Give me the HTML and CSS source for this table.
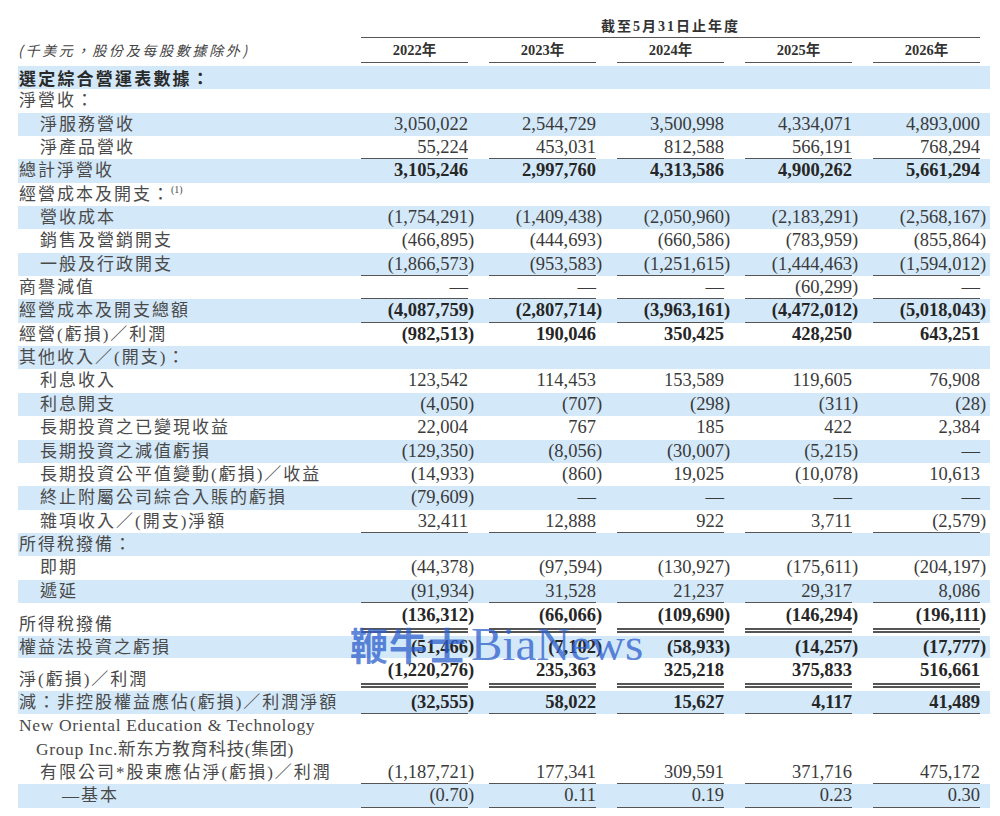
FILE: index.html
```html
<!DOCTYPE html>
<html lang="zh-Hant">
<head>
<meta charset="utf-8">
<title>選定綜合營運表數據</title>
<link rel="stylesheet" href="styles.css">
</head>
<body>
<div class="sheet">
  <div class="row head-top">
    <div class="period">截至5月31日止年度</div>
  </div>
  <div class="row head-years">
    <div class="unit">(千美元，股份及每股數據除外)</div>
    <div class="year">2022年</div>
    <div class="year">2023年</div>
    <div class="year">2024年</div>
    <div class="year">2025年</div>
    <div class="year">2026年</div>
  </div>

  <div class="row band"><div class="lbl heading">選定綜合營運表數據：</div></div>
  <div class="row"><div class="lbl">淨營收：</div></div>
  <div class="row band"><div class="lbl l1">淨服務營收</div>
    <div class="num">3,050,022</div><div class="num">2,544,729</div><div class="num">3,500,998</div><div class="num">4,334,071</div><div class="num">4,893,000</div></div>
  <div class="row ul"><div class="lbl l1">淨產品營收</div>
    <div class="num">55,224</div><div class="num">453,031</div><div class="num">812,588</div><div class="num">566,191</div><div class="num">768,294</div></div>
  <div class="row band bold"><div class="lbl">總計淨營收</div>
    <div class="num">3,105,246</div><div class="num">2,997,760</div><div class="num">4,313,586</div><div class="num">4,900,262</div><div class="num">5,661,294</div></div>
  <div class="row"><div class="lbl">經營成本及開支：<sup class="fn">(1)</sup></div></div>
  <div class="row band"><div class="lbl l1">營收成本</div>
    <div class="num">(1,754,291<span class="cp">)</span></div><div class="num">(1,409,438<span class="cp">)</span></div><div class="num">(2,050,960<span class="cp">)</span></div><div class="num">(2,183,291<span class="cp">)</span></div><div class="num">(2,568,167<span class="cp">)</span></div></div>
  <div class="row"><div class="lbl l1">銷售及營銷開支</div>
    <div class="num">(466,895<span class="cp">)</span></div><div class="num">(444,693<span class="cp">)</span></div><div class="num">(660,586<span class="cp">)</span></div><div class="num">(783,959<span class="cp">)</span></div><div class="num">(855,864<span class="cp">)</span></div></div>
  <div class="row band ul"><div class="lbl l1">一般及行政開支</div>
    <div class="num">(1,866,573<span class="cp">)</span></div><div class="num">(953,583<span class="cp">)</span></div><div class="num">(1,251,615<span class="cp">)</span></div><div class="num">(1,444,463<span class="cp">)</span></div><div class="num">(1,594,012<span class="cp">)</span></div></div>
  <div class="row ul"><div class="lbl">商譽減值</div>
    <div class="num">—</div><div class="num">—</div><div class="num">—</div><div class="num">(60,299<span class="cp">)</span></div><div class="num">—</div></div>
  <div class="row band bold ul"><div class="lbl">經營成本及開支總額</div>
    <div class="num">(4,087,759<span class="cp">)</span></div><div class="num">(2,807,714<span class="cp">)</span></div><div class="num">(3,963,161<span class="cp">)</span></div><div class="num">(4,472,012<span class="cp">)</span></div><div class="num">(5,018,043<span class="cp">)</span></div></div>
  <div class="row bold"><div class="lbl">經營(虧損)／利潤</div>
    <div class="num">(982,513<span class="cp">)</span></div><div class="num">190,046</div><div class="num">350,425</div><div class="num">428,250</div><div class="num">643,251</div></div>
  <div class="row band"><div class="lbl">其他收入／(開支)：</div></div>
  <div class="row"><div class="lbl l1">利息收入</div>
    <div class="num">123,542</div><div class="num">114,453</div><div class="num">153,589</div><div class="num">119,605</div><div class="num">76,908</div></div>
  <div class="row band"><div class="lbl l1">利息開支</div>
    <div class="num">(4,050<span class="cp">)</span></div><div class="num">(707<span class="cp">)</span></div><div class="num">(298<span class="cp">)</span></div><div class="num">(311<span class="cp">)</span></div><div class="num">(28<span class="cp">)</span></div></div>
  <div class="row"><div class="lbl l1">長期投資之已變現收益</div>
    <div class="num">22,004</div><div class="num">767</div><div class="num">185</div><div class="num">422</div><div class="num">2,384</div></div>
  <div class="row band"><div class="lbl l1">長期投資之減值虧損</div>
    <div class="num">(129,350<span class="cp">)</span></div><div class="num">(8,056<span class="cp">)</span></div><div class="num">(30,007<span class="cp">)</span></div><div class="num">(5,215<span class="cp">)</span></div><div class="num">—</div></div>
  <div class="row"><div class="lbl l1">長期投資公平值變動(虧損)／收益</div>
    <div class="num">(14,933<span class="cp">)</span></div><div class="num">(860<span class="cp">)</span></div><div class="num">19,025</div><div class="num">(10,078<span class="cp">)</span></div><div class="num">10,613</div></div>
  <div class="row band"><div class="lbl l1">終止附屬公司綜合入賬的虧損</div>
    <div class="num">(79,609<span class="cp">)</span></div><div class="num">—</div><div class="num">—</div><div class="num">—</div><div class="num">—</div></div>
  <div class="row ul"><div class="lbl l1">雜項收入／(開支)淨額</div>
    <div class="num">32,411</div><div class="num">12,888</div><div class="num">922</div><div class="num">3,711</div><div class="num">(2,579<span class="cp">)</span></div></div>
  <div class="row band"><div class="lbl">所得稅撥備：</div></div>
  <div class="row"><div class="lbl l1">即期</div>
    <div class="num">(44,378<span class="cp">)</span></div><div class="num">(97,594<span class="cp">)</span></div><div class="num">(130,927<span class="cp">)</span></div><div class="num">(175,611<span class="cp">)</span></div><div class="num">(204,197<span class="cp">)</span></div></div>
  <div class="row band ul"><div class="lbl l1">遞延</div>
    <div class="num">(91,934<span class="cp">)</span></div><div class="num">31,528</div><div class="num">21,237</div><div class="num">29,317</div><div class="num">8,086</div></div>
  <div class="row tall bold dbl"><div class="lbl">所得稅撥備</div>
    <div class="num">(136,312<span class="cp">)</span></div><div class="num">(66,066<span class="cp">)</span></div><div class="num">(109,690<span class="cp">)</span></div><div class="num">(146,294<span class="cp">)</span></div><div class="num">(196,111<span class="cp">)</span></div></div>
  <div class="row band bold short"><div class="lbl">權益法投資之虧損</div>
    <div class="num">(51,466<span class="cp">)</span></div><div class="num">(7,102<span class="cp">)</span></div><div class="num">(58,933<span class="cp">)</span></div><div class="num">(14,257<span class="cp">)</span></div><div class="num">(17,777<span class="cp">)</span></div></div>
  <div class="row tall bold dbl"><div class="lbl">淨(虧損)／利潤</div>
    <div class="num">(1,220,276<span class="cp">)</span></div><div class="num">235,363</div><div class="num">325,218</div><div class="num">375,833</div><div class="num">516,661</div></div>
  <div class="row band bold ul"><div class="lbl">減：非控股權益應佔(虧損)／利潤淨額</div>
    <div class="num">(32,555<span class="cp">)</span></div><div class="num">58,022</div><div class="num">15,627</div><div class="num">4,117</div><div class="num">41,489</div></div>
  <div class="row multi ul"><div class="lbl">
      <span class="line en">New Oriental Education &amp; Technology</span>
      <span class="line en hang">Group Inc.新东方教育科技(集团)</span>
      <span class="line hang2">有限公司*股東應佔淨(虧損)／利潤</span></div>
    <div class="num">(1,187,721<span class="cp">)</span></div><div class="num">177,341</div><div class="num">309,591</div><div class="num">371,716</div><div class="num">475,172</div></div>
  <div class="row band ul"><div class="lbl l2">—基本</div>
    <div class="num">(0.70<span class="cp">)</span></div><div class="num">0.11</div><div class="num">0.19</div><div class="num">0.23</div><div class="num">0.30</div></div>

  <div class="watermark"><span class="wm-cn">鞭牛士</span> <span class="wm-en">BiaNews</span></div>
</div>
</body>
</html>
```

FILE: styles.css
```css
html, body {
  margin: 0;
  padding: 0;
  background: #ffffff;
}

body {
  font-family: "Liberation Serif", "Noto Sans CJK TC", serif;
  color: #3c3c3c;
}

.sheet {
  position: relative;
  width: 972px;
  margin-left: 18px;
  padding-top: 17px;
}

.row {
  display: grid;
  grid-template-columns: 322px repeat(5, 128px);
  padding-right: 10px;
  height: 23.35px;
}

.band {
  background: #d3e8f8;
}

.lbl {
  font-family: "Liberation Serif", "Noto Sans CJK TC", serif;
  font-size: 17px;
  letter-spacing: 2px;
  line-height: 23px;
  padding-left: 1px;
  color: #4a4a4a;
  white-space: nowrap;
}

.lbl.l1 { padding-left: 22px; }
.lbl.l2 { padding-left: 44px; }

.heading {
  font-family: "Noto Sans CJK TC", sans-serif;
  font-weight: 700;
  color: #2a2a2a;
  letter-spacing: 2.2px;
}

.fn {
  font-family: "Liberation Serif", serif;
  font-size: 10px;
  letter-spacing: 0;
  vertical-align: 7px;
  line-height: 0;
}

.num {
  margin-left: 21px;
  text-align: right;
  font-family: "Liberation Serif", serif;
  font-size: 18.5px;
  line-height: 22px;
  color: #3a3a3a;
  white-space: nowrap;
}

.cp {
  margin-right: -0.333em;
}

.bold .num {
  font-weight: 700;
  color: #262626;
}

.ul .num {
  border-bottom: 1px solid #555;
}

/* header */
.head-top {
  height: 20px;
}

.period {
  grid-column: 2 / -1;
  margin-left: 21px;
  border-bottom: 1px solid #555;
  text-align: center;
  font-family: "Liberation Serif", "Noto Sans CJK TC", serif;
  font-weight: 700;
  font-size: 14px;
  letter-spacing: 2px;
  line-height: 20px;
  color: #333;
}

.head-years {
  height: 29px;
}

.unit {
  font-family: "Noto Sans CJK TC", sans-serif;
  font-style: italic;
  font-size: 14px;
  letter-spacing: 2.7px;
  line-height: 26px;
  color: #444;
  white-space: nowrap;
}

.year {
  margin-left: 21px;
  text-align: center;
  font-family: "Liberation Serif", "Noto Sans CJK TC", serif;
  font-weight: 700;
  font-size: 14.5px;
  line-height: 24px;
  border-bottom: 1px solid #555;
  color: #333;
  align-self: start;
  padding-top: 1px;
}

/* tall rows with double rule */
.tall {
  height: 33px;
}

.tall .lbl {
  align-self: end;
}

.tall .num {
  align-self: start;
  line-height: 23px;
  padding-top: 1px;
  padding-bottom: 1px;
  border-bottom: 5px double #555;
}

.short {
  height: 22px;
}

/* multi-line label */
.multi {
  height: 70px;
}

.multi .lbl {
  display: flex;
  flex-direction: column;
}

.line {
  display: block;
  line-height: 23.3px;
}

.en {
  font-size: 17.5px;
  letter-spacing: 0.62px;
}

.hang { padding-left: 17px; }
.hang2 { padding-left: 21px; }

.multi .num {
  align-self: end;
}

/* watermark */
.watermark {
  position: absolute;
  left: 332px;
  top: 614px;
  white-space: nowrap;
  color: rgba(45, 95, 205, 0.75);
  pointer-events: none;
  line-height: 60px;
}

.wm-cn {
  font-family: "Noto Sans CJK SC", sans-serif;
  font-weight: 700;
  font-size: 38px;
  letter-spacing: 1px;
}

.wm-en {
  font-family: "Liberation Serif", serif;
  font-size: 47px;
}
```
